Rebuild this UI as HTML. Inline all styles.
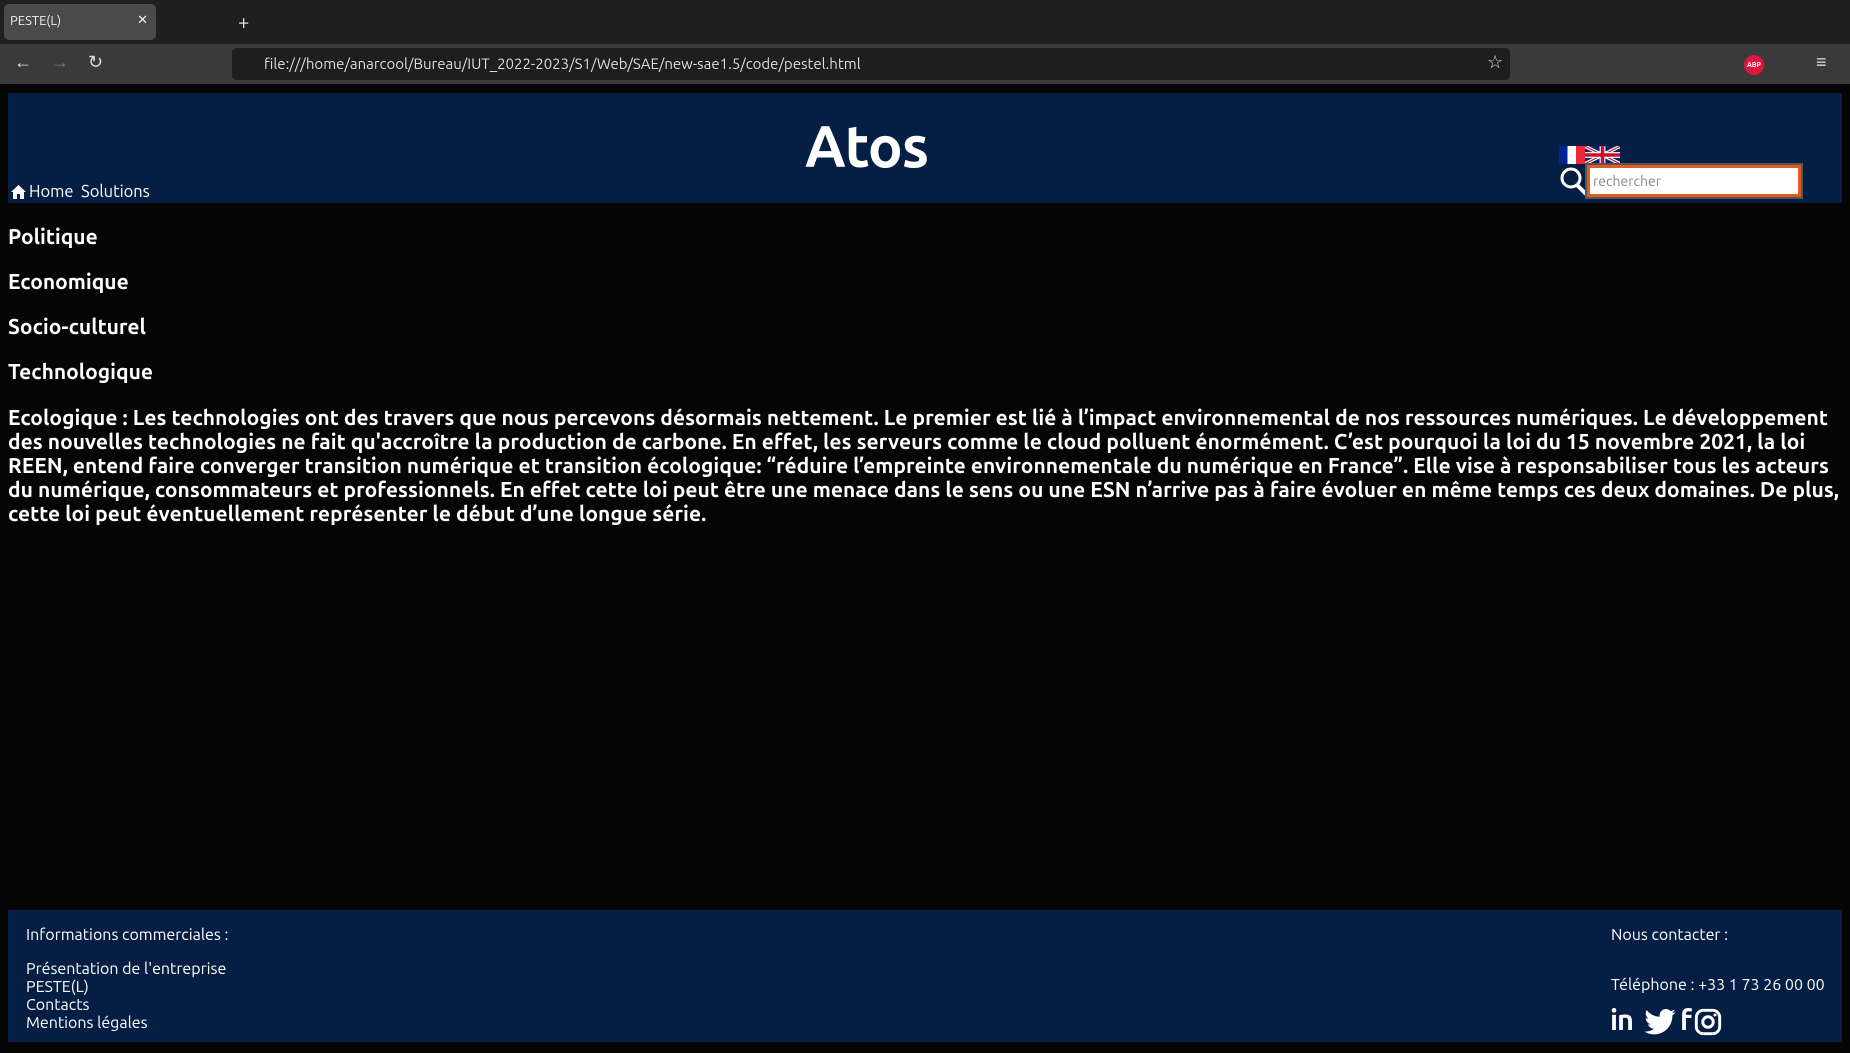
<!DOCTYPE html>
<html><head><meta charset="utf-8"><style>
*{margin:0;padding:0;box-sizing:border-box}
body{width:1850px;height:1053px;background:#000;font-family:"Ubuntu","Liberation Sans",sans-serif;position:relative;overflow:hidden;color:#fff}
.abs{position:absolute}
#tabbar{left:0;top:0;width:1850px;height:44px;background:#1f1f1f}
#tab{left:4px;top:4px;width:152px;height:36px;background:#4a4a4a;border-radius:5px;font-size:13px;color:#eee;padding:10px 6px}
#toolbar{left:0;top:44px;width:1850px;height:40px;background:#3a3a3a}
#url{left:232px;top:48px;width:1278px;height:32px;background:#1e1e1e;border-radius:4px;font-size:15px;color:#ddd;padding:7px 32px}
#page{left:0;top:84px;width:1850px;height:969px;background:#050505}
#hdr{left:8px;top:93px;width:1834px;height:110px;background:#051f44}
#foot{left:8px;top:910px;width:1834px;height:132px;background:#051f44}
.h{left:8px;font-size:21px;font-weight:bold;color:#fff}
.p{left:8px;font-size:21px;font-weight:bold;white-space:nowrap;line-height:24px;letter-spacing:0.05px}
.f{font-size:16px;color:#fff;white-space:nowrap}
</style></head><body>
<div class="abs" id="tabbar"></div>
<div class="abs" id="tab">PESTE(L)<span style="position:absolute;right:8px;top:9px">✕</span></div>
<div class="abs" style="left:238px;top:10px;font-size:20px;color:#ddd">+</div>
<div class="abs" id="toolbar"></div>
<div class="abs" style="left:14px;top:52px;font-size:18px;color:#ddd">←</div>
<div class="abs" style="left:51px;top:52px;font-size:18px;color:#777">→</div>
<div class="abs" style="left:88px;top:52px;font-size:18px;color:#ddd">↻</div>
<div class="abs" id="url">file:///home/anarcool/Bureau/IUT_2022-2023/S1/Web/SAE/new-sae1.5/code/pestel.html</div>
<div class="abs" style="left:1487px;top:52px;font-size:18px;color:#ddd">☆</div>
<div class="abs" style="left:1744px;top:55px;width:20px;height:20px;border-radius:50%;background:#e0173b;font-size:7px;font-weight:bold;text-align:center;line-height:20px">ABP</div>
<div class="abs" style="left:1816px;top:52px;font-size:18px;color:#ddd">≡</div>
<div class="abs" id="page"></div>
<div class="abs" id="hdr"></div>
<div class="abs" style="left:805px;top:114px;font-size:58px;font-weight:bold;letter-spacing:-1px;color:#fff;line-height:64px">Atos</div>
<svg class="abs" style="left:11px;top:185px" width="15" height="14" viewBox="0 0 15 14"><path d="M7.5 0L0 7h2v7h4V9h3v5h4V7h2z" fill="#fff"/></svg>
<div class="abs" style="left:29px;top:183px;font-size:16.5px">Home&nbsp;&nbsp;Solutions</div>
<div class="abs" style="left:1559px;top:146px;width:26px;height:18px;background:linear-gradient(90deg,#002395 33%,#fff 33% 66%,#ed2939 66%)"></div>
<svg class="abs" style="left:1585px;top:146px" width="35" height="18" viewBox="0 0 60 30"><rect width="60" height="30" fill="#012169"/><path d="M0 0L60 30M60 0L0 30" stroke="#fff" stroke-width="6"/><path d="M0 0L60 30M60 0L0 30" stroke="#C8102E" stroke-width="2"/><path d="M30 0V30M0 15H60" stroke="#fff" stroke-width="10"/><path d="M30 0V30M0 15H60" stroke="#C8102E" stroke-width="6"/></svg>
<svg class="abs" style="left:1559px;top:166px" width="30" height="30" viewBox="0 0 30 30"><circle cx="12" cy="12" r="9" stroke="#fff" stroke-width="3" fill="none"/><path d="M18 19L27 28" stroke="#fff" stroke-width="4"/></svg>
<div class="abs" style="left:1587px;top:165px;width:214px;height:32px;background:#fff;border:3px solid #e35a23;outline:2px solid #555;font-size:14px;color:#888;padding:5px 3px">rechercher</div>
<div class="abs h" style="top:224px">Politique</div>
<div class="abs h" style="top:269px">Economique</div>
<div class="abs h" style="top:314px">Socio-culturel</div>
<div class="abs h" style="top:359px">Technologique</div>
<div class="abs p" style="top:405px">Ecologique : Les technologies ont des travers que nous percevons désormais nettement. Le premier est lié à l’impact environnemental de nos ressources numériques. Le développement<br>des nouvelles technologies ne fait qu'accroître la production de carbone. En effet, les serveurs comme le cloud polluent énormément. C’est pourquoi la loi du 15 novembre 2021, la loi<br>REEN, entend faire converger transition numérique et transition écologique: “réduire l’empreinte environnementale du numérique en France”. Elle vise à responsabiliser tous les acteurs<br>du numérique, consommateurs et professionnels. En effet cette loi peut être une menace dans le sens ou une ESN n’arrive pas à faire évoluer en même temps ces deux domaines. De plus,<br>cette loi peut éventuellement représenter le début d’une longue série.</div>
<div class="abs" id="foot"></div>
<div class="abs f" style="left:26px;top:926px">Informations commerciales :</div>
<div class="abs f" style="left:26px;top:960px;line-height:18px">Présentation de l'entreprise<br>PESTE(L)<br>Contacts<br>Mentions légales</div>
<div class="abs f" style="left:1611px;top:926px">Nous contacter :</div>
<div class="abs f" style="left:1611px;top:976px">Téléphone : +33 1 73 26 00 00</div>
<div class="abs" style="left:1610px;top:1004px;font-size:29px;font-weight:bold;letter-spacing:-1px">in</div>
<svg class="abs" style="left:1644px;top:1009px" width="32" height="26" viewBox="0 0 24 20"><path d="M24 2.4a10 10 0 0 1-2.8.8A5 5 0 0 0 23.3.4a10 10 0 0 1-3.1 1.2A4.9 4.9 0 0 0 11.8 6 14 14 0 0 1 1.7.9a4.9 4.9 0 0 0 1.5 6.6A5 5 0 0 1 1 6.9a4.9 4.9 0 0 0 3.9 4.8 5 5 0 0 1-2.2.1 4.9 4.9 0 0 0 4.6 3.4A9.9 9.9 0 0 1 0 17.3 14 14 0 0 0 7.5 19.5c9 0 14-7.5 14-14v-.6A10 10 0 0 0 24 2.4z" fill="#fff"/></svg>
<div class="abs" style="left:1680px;top:1004px;font-size:29px;font-weight:bold">f</div>
<svg class="abs" style="left:1694px;top:1008px" width="28" height="28" viewBox="0 0 24 24"><rect x="2" y="2" width="20" height="20" rx="6" stroke="#fff" stroke-width="2.5" fill="none"/><circle cx="12" cy="12" r="4.5" stroke="#fff" stroke-width="2.5" fill="none"/><circle cx="18" cy="6" r="1.3" fill="#fff"/></svg>
</body></html>
